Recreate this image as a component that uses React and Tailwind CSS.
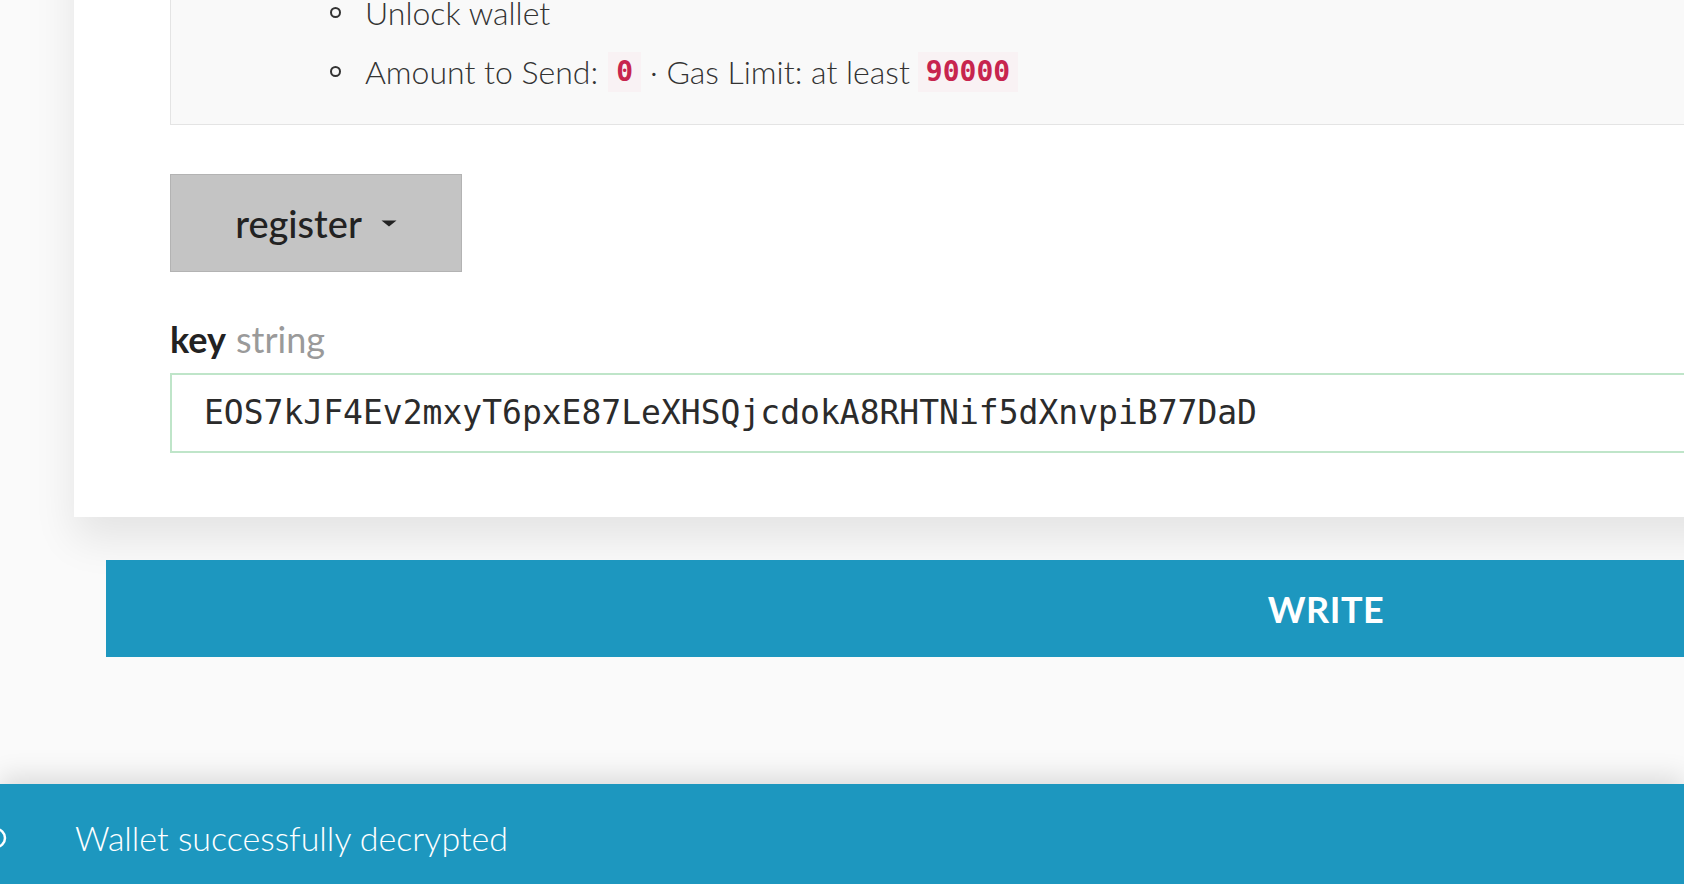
export default function App() {
  const mono = "font-['DejaVu_Sans_Mono','Liberation_Mono',monospace]";
  return (
    <div className="relative w-[1684px] h-[884px] overflow-hidden bg-[#fafafa] font-['Lato','Open_Sans',sans-serif] text-[#333]">
      <div className="w-[2504px] ml-[74px] mt-[-100px]">
        <div className="bg-white pt-[40px] pb-[64px] pl-[96px] pr-[96px] shadow-[0_22px_40px_rgba(0,0,0,0.09)]">
          <div className="bg-[#f9f9f9] border border-[#e4e4e4] pt-[42px] pb-[23px] pl-[159px]">
            <ul className="text-[32px] font-light">
              <li className="flex items-center h-[59px] leading-[59px]">
                <span className="w-[11px] h-[11px] rounded-full border-2 border-[#333] mr-[24px]" />
                <span>Unlock wallet</span>
              </li>
              <li className="flex items-center h-[59px] leading-[59px]">
                <span className="w-[11px] h-[11px] rounded-full border-2 border-[#333] mr-[24px]" />
                <span>Amount to Send:</span>
                <code className={`${mono} ml-[10px] mr-[9px] px-[8px] leading-[40px] text-[28px] font-semibold text-[#c7254e] bg-[#f9f2f4]`}>0</code>
                <span>· Gas Limit: at least</span>
                <code className={`${mono} ml-[8px] px-[8px] leading-[40px] text-[28px] font-semibold text-[#c7254e] bg-[#f9f2f4]`}>90000</code>
              </li>
            </ul>
          </div>

          <button className="mt-[49px] w-[292px] h-[98px] bg-[#c4c4c4] border border-[#b3b3b3] flex items-center justify-center gap-[19px] text-[38px] font-medium text-[#222]">
            <span>register</span>
            <svg width="16" height="7" viewBox="0 0 16 7">
              <path d="M0.5 0.5 L15.5 0.5 L8 6.5 Z" fill="#222" />
            </svg>
          </button>

          <div className="mt-[49px] h-[36px] leading-[36px] text-[36px]">
            <span className="font-bold text-[#222]">key</span>
            <span className="ml-[10px] text-[#9a9a9a] font-normal">string</span>
          </div>

          <div className="mt-[16px] h-[80px] border-2 border-[#bfe5c9] bg-white flex items-center pl-[32px]">
            <span className={`${mono} text-[33px] text-[#2b2b2b]`}>EOS7kJF4Ev2mxyT6pxE87LeXHSQjcdokA8RHTNif5dXnvpiB77DaD</span>
          </div>
        </div>

        <button className="mt-[43px] ml-[32px] w-[2440px] h-[97px] bg-[#1d97bf] text-white text-[36px] font-bold tracking-[0.5px] uppercase flex items-center justify-center">
          WRITE
        </button>
      </div>

      <div className="absolute left-0 bottom-0 w-full h-[100px] bg-[#1d97bf] shadow-[0_-8px_24px_rgba(0,0,0,0.12)] flex items-center pt-[6px] text-white">
        <svg className="absolute left-0 top-[42px]" width="10" height="24" viewBox="0 0 10 24">
          <circle cx="-4" cy="12" r="9" fill="none" stroke="white" strokeWidth="2.5" />
        </svg>
        <span className="ml-[75px] text-[34px] font-light">Wallet successfully decrypted</span>
      </div>
    </div>
  );
}
